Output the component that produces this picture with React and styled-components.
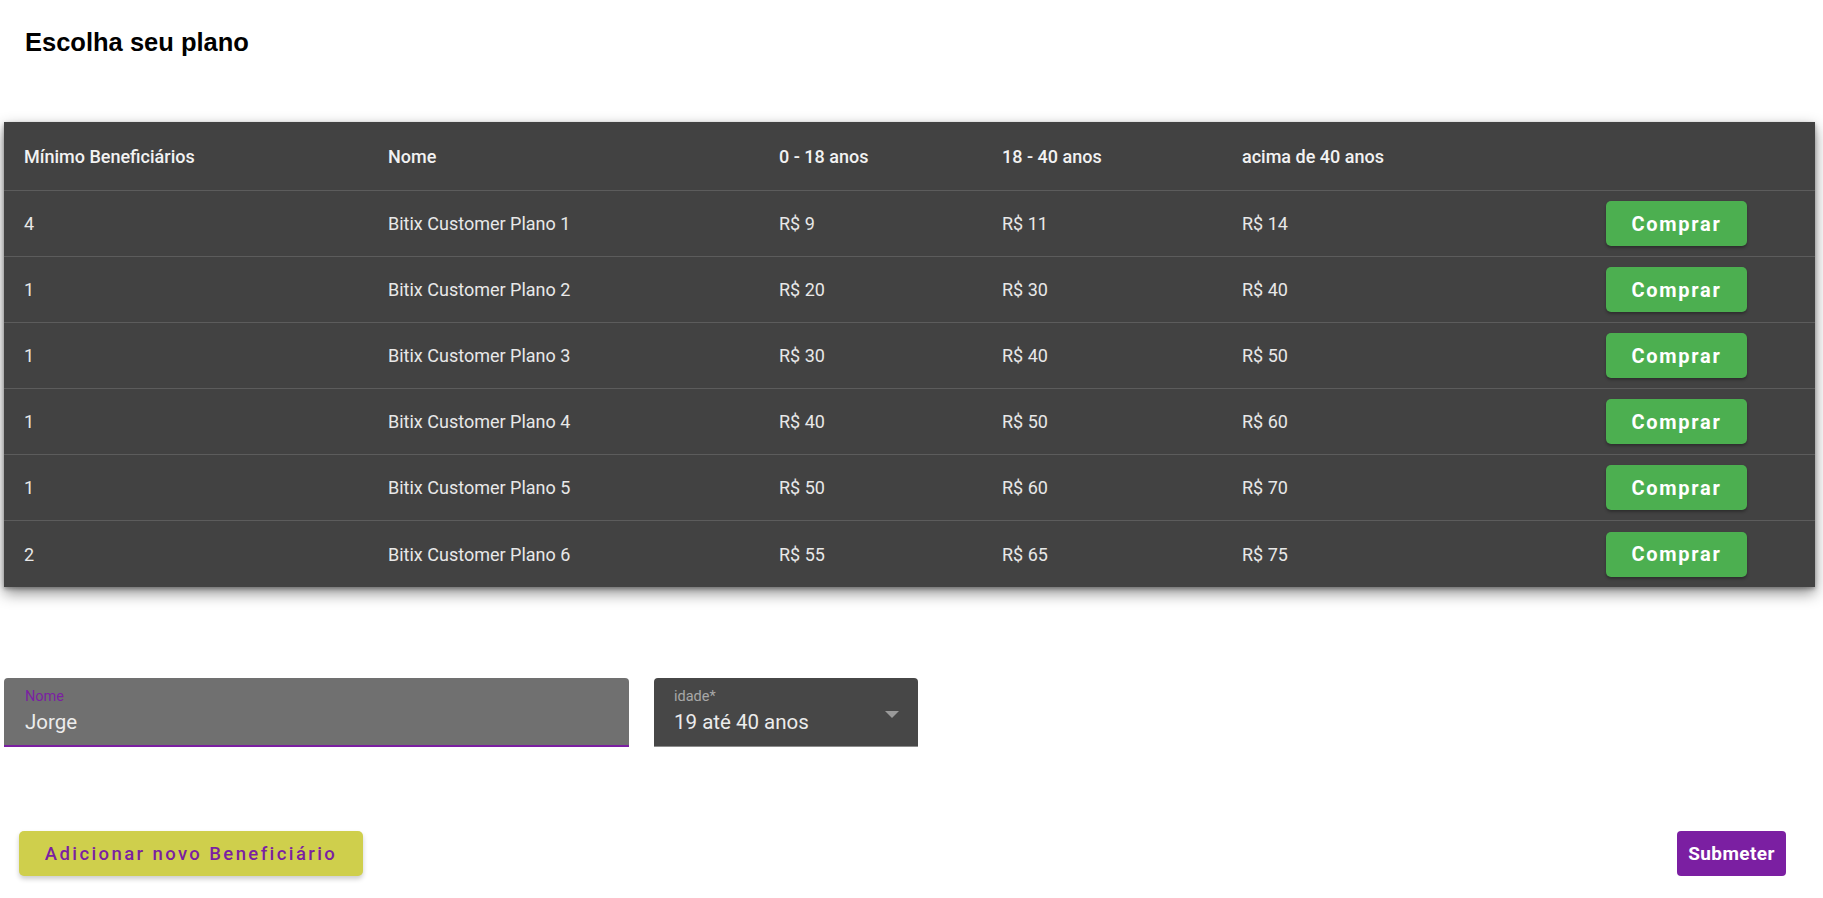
import React from 'react'
import styled, { createGlobalStyle } from 'styled-components'

const planos = [
  { minimo: 4, nome: 'Bitix Customer Plano 1', p1: 9, p2: 11, p3: 14 },
  { minimo: 1, nome: 'Bitix Customer Plano 2', p1: 20, p2: 30, p3: 40 },
  { minimo: 1, nome: 'Bitix Customer Plano 3', p1: 30, p2: 40, p3: 50 },
  { minimo: 1, nome: 'Bitix Customer Plano 4', p1: 40, p2: 50, p3: 60 },
  { minimo: 1, nome: 'Bitix Customer Plano 5', p1: 50, p2: 60, p3: 70 },
  { minimo: 2, nome: 'Bitix Customer Plano 6', p1: 55, p2: 65, p3: 75 },
]

function App() {
  return (
    <Page>
      <GlobalStyle />
      <Title>Escolha seu plano</Title>

      <TableCard>
        <HeaderRow>
          <Cell>Mínimo Beneficiários</Cell>
          <Cell>Nome</Cell>
          <Cell>0 - 18 anos</Cell>
          <Cell>18 - 40 anos</Cell>
          <Cell>acima de 40 anos</Cell>
          <Cell />
        </HeaderRow>
        {planos.map((p, i) => (
          <BodyRow key={i} last={i === planos.length - 1}>
            <Cell>{p.minimo}</Cell>
            <Cell>{p.nome}</Cell>
            <Cell>R$ {p.p1}</Cell>
            <Cell>R$ {p.p2}</Cell>
            <Cell>R$ {p.p3}</Cell>
            <Cell>
              <BuyButton>Comprar</BuyButton>
            </Cell>
          </BodyRow>
        ))}
      </TableCard>

      <FormRow>
        <TextField>
          <FieldLabel color="#7b1fa2">Nome</FieldLabel>
          <FieldValue>Jorge</FieldValue>
        </TextField>
        <SelectField>
          <FieldLabel color="#a8a8a8">idade*</FieldLabel>
          <FieldValue>19 até 40 anos</FieldValue>
          <Arrow width="14" height="7" viewBox="0 0 14 7">
            <polygon points="0,0 14,0 7,7" fill="#9a9a9a" />
          </Arrow>
        </SelectField>
      </FormRow>

      <Footer>
        <AddButton>Adicionar novo Beneficiário</AddButton>
        <SubmitButton>Submeter</SubmitButton>
      </Footer>
    </Page>
  )
}

export default App

const GlobalStyle = createGlobalStyle`
    body {
        margin: 0;
        background: #ffffff;
        font-family: Roboto, "Liberation Sans", sans-serif;
    }
`

const Page = styled.div`
    padding: 28px 8px 20px 4px;
`

const Title = styled.h3`
    margin: 0 0 66px 21px;
    font-family: "Liberation Sans", Arial, sans-serif;
    font-size: 25.5px;
    font-weight: bold;
    color: #000;
    line-height: 28px;
`

const TableCard = styled.div`
    background: #424242;
    box-shadow: 0 6px 14px rgba(0, 0, 0, 0.45), 0 2px 4px rgba(0, 0, 0, 0.3);
`

const HeaderRow = styled.div`
    display: grid;
    grid-template-columns: 364px 391px 223px 240px 364px 141px;
    align-items: center;
    height: 69px;
    box-sizing: border-box;
    padding-left: 20px;
    border-bottom: 1px solid #5c5c5c;
    font-size: 18px;
    font-weight: 500;
    color: #f2f2f2;
`

const BodyRow = styled.div`
    display: grid;
    grid-template-columns: 364px 391px 223px 240px 364px 141px;
    align-items: center;
    height: 66px;
    box-sizing: border-box;
    padding-left: 20px;
    border-bottom: ${(p) => (p.last ? 'none' : '1px solid #5c5c5c')};
    font-size: 18px;
    color: #e8e8e8;
`

const Cell = styled.div`
    white-space: nowrap;
`

const BuyButton = styled.button`
    display: block;
    width: 141px;
    height: 45px;
    border: none;
    border-radius: 5px;
    background: #4caf50;
    color: #fff;
    font-family: Roboto, sans-serif;
    font-size: 20px;
    font-weight: bold;
    letter-spacing: 1.7px;
    box-shadow: 0 2px 3px rgba(0, 0, 0, 0.3);
    cursor: pointer;
`

const FormRow = styled.div`
    display: flex;
    gap: 25px;
    margin-top: 91px;
`

const TextField = styled.div`
    position: relative;
    width: 625px;
    height: 69px;
    box-sizing: border-box;
    padding: 10px 21px 0;
    background: #707070;
    border-radius: 4px 4px 0 0;
    border-bottom: 2px solid #7b1fa2;
`

const SelectField = styled.div`
    position: relative;
    width: 264px;
    height: 69px;
    box-sizing: border-box;
    padding: 10px 20px 0;
    background: #474747;
    border-radius: 4px 4px 0 0;
    border-bottom: 1px solid #8c8c8c;
`

const FieldLabel = styled.div`
    font-size: 14.5px;
    line-height: 17px;
    color: ${(p) => p.color};
`

const FieldValue = styled.div`
    margin-top: 4px;
    font-size: 20.5px;
    line-height: 26px;
    color: #ececec;
`

const Arrow = styled.svg`
    position: absolute;
    right: 19px;
    top: 33px;
`

const Footer = styled.div`
    display: flex;
    justify-content: space-between;
    align-items: center;
    margin-top: 84px;
    padding: 0 29px 0 15px;
`

const AddButton = styled.button`
    width: 344px;
    height: 45px;
    border: none;
    border-radius: 5px;
    background: #cfcf4c;
    color: #7b1fa2;
    font-family: Roboto, sans-serif;
    font-size: 18.5px;
    font-weight: 500;
    letter-spacing: 2.4px;
    box-shadow: 0 3px 5px rgba(0, 0, 0, 0.2);
    cursor: pointer;
`

const SubmitButton = styled.button`
    width: 109px;
    height: 45px;
    border: none;
    border-radius: 4px;
    background: #7b1fa2;
    color: #fff;
    font-family: Roboto, sans-serif;
    font-size: 19px;
    font-weight: bold;
    letter-spacing: 0.4px;
    cursor: pointer;
`
